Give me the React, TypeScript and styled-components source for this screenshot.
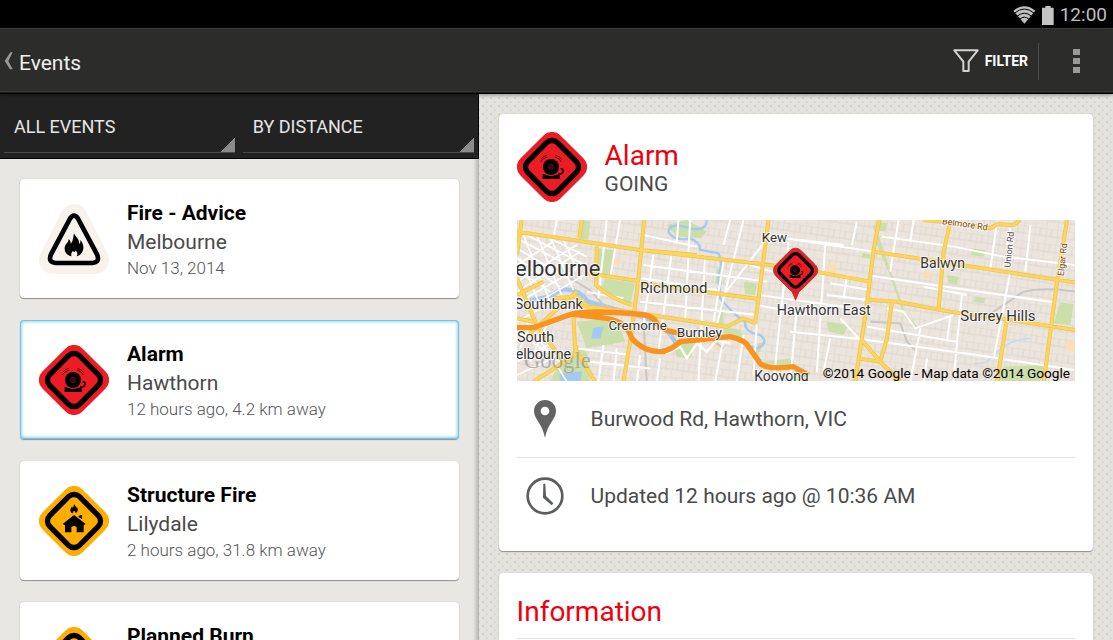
import React, { useState } from "react";
import styled, { createGlobalStyle, css } from "styled-components";

const GlobalStyle = createGlobalStyle`
  *, *::before, *::after { box-sizing: border-box; }
  body {
    margin: 0;
    font-family: Roboto, "Noto Sans", sans-serif;
    background: #e8e7e3;
    color: #444;
  }
  button, select { font-family: inherit; }
  h1, h2, p, ul { margin: 0; padding: 0; }
`;

const Screen = styled.div`
  display: flex;
  flex-direction: column;
  height: 100vh;
  overflow: hidden;
`;

const StatusBar = styled.div`
  flex: none;
  display: flex;
  align-items: center;
  justify-content: flex-end;
  gap: 6px;
  height: 28px;
  padding: 2px 6px 0 0;
  background: #000;
  color: #bebebe;
  font-size: 19px;
  line-height: 26px;
  font-weight: 400;
`;

const ActionBar = styled.header`
  flex: none;
  display: flex;
  align-items: center;
  justify-content: space-between;
  height: 66px;
  padding: 0 16px 0 4px;
  background: #2c2c2a;
  border-top: 1px solid #3d3d3c;
  border-bottom: 1px solid #000;
  box-shadow: inset 0 -1px 0 #1b1b1a, inset 0 -2px 0 #3a3a38, 0 1px 4px rgba(0, 0, 0, 0.4);
  position: relative;
  z-index: 2;
`;

const UpLink = styled.a`
  display: flex;
  align-items: center;
  gap: 6px;
  color: #f0f0f0;
  text-decoration: none;
`;

const ScreenTitle = styled.h1`
  padding-top: 3px;
  font-size: 21px;
  line-height: 28px;
  font-weight: 400;
`;

const Actions = styled.div`
  display: flex;
  align-items: center;
`;

const FilterButton = styled.button`
  display: flex;
  align-items: center;
  gap: 6px;
  height: 37px;
  padding: 0 10px;
  border: 0;
  border-right: 1px solid #4b4b49;
  background: none;
  color: #fff;
  font-size: 14px;
  font-weight: 700;
`;

const OverflowButton = styled.button`
  display: flex;
  align-items: center;
  justify-content: flex-end;
  width: 58px;
  height: 48px;
  padding: 0 17px 0 0;
  border: 0;
  background: none;
`;

const Panes = styled.main`
  flex: 1;
  min-height: 0;
  display: flex;
`;

const ListPane = styled.section`
  flex: none;
  display: flex;
  flex-direction: column;
  width: 43%;
  min-height: 0;
  background: linear-gradient(to left, rgba(0, 0, 0, 0.22), rgba(0, 0, 0, 0) 6px), #e8e7e3;
`;

const Spinners = styled.div`
  flex: none;
  display: flex;
  gap: 8px;
  height: 65px;
  padding: 0 4px 5px;
  background: #222;
  border-right: 1px solid #000;
  border-bottom: 1px solid #000;
`;

const Spinner = styled.label`
  flex: 1;
  display: flex;
  border-bottom: 1px solid #4a4a4a;
  background: linear-gradient(135deg, transparent 50%, #8b8b8b 50%) right bottom / 14px 14px no-repeat;
`;

const SpinnerSelect = styled.select`
  flex: 1;
  width: 100%;
  appearance: none;
  border: 0;
  background: none;
  padding: 6px 10px 0;
  color: #e6e6e6;
  font-size: 18px;
`;

const EventList = styled.ul`
  flex: 1;
  min-height: 0;
  overflow-y: auto;
  scrollbar-width: none;
  display: flex;
  flex-direction: column;
  gap: 22px;
  padding: 20px;
  list-style: none;
`;

const cardSurface = css`
  background: #fff;
  border-radius: 4px;
  box-shadow: 0 1px 1px #8f8f8c, 0 0 1px #b9b8b4;
`;

const EventCard = styled.button<{ $selected: boolean }>`
  ${cardSurface}
  display: flex;
  align-items: center;
  gap: 18px;
  width: 100%;
  height: 119px;
  padding: 0 19px;
  border: 0;
  text-align: left;
  ${(p) =>
    p.$selected &&
    css`
      box-shadow: inset 0 0 0 1px #74c6e6, inset 0 0 3px 2px #8fd6f2, 0 1px 1px #8f8f8c;
    `}
`;

const Lines = styled.span`
  display: flex;
  flex-direction: column;
`;

const EventName = styled.span`
  font-size: 21px;
  line-height: 30px;
  font-weight: 700;
  color: #000;
`;

const EventPlace = styled.span`
  font-size: 21px;
  line-height: 28px;
  color: #4a4a4a;
`;

const EventTime = styled.span`
  font-size: 17px;
  line-height: 24px;
  font-weight: 300;
  color: #555;
`;

const DetailPane = styled.section`
  flex: 1;
  min-width: 0;
  overflow-y: auto;
  scrollbar-width: none;
  display: flex;
  flex-direction: column;
  gap: 22px;
  padding: 20px;
  background-color: #e3e2dc;
  background-image: radial-gradient(circle, #d3d1cb 1px, transparent 1px),
    radial-gradient(circle, #d8d6d0 1px, transparent 1px);
  background-size: 8px 8px;
  background-position: 0 0, 4px 4px;
`;

const DetailCard = styled.article`
  ${cardSurface}
  flex: none;
  padding: 18px;
`;

const DetailHeader = styled.header`
  display: flex;
  align-items: center;
  gap: 18px;
  margin-bottom: 18px;
`;

const HeaderText = styled.div`
  padding-top: 2px;
`;

const RedTitle = styled.h2`
  font-size: 28px;
  line-height: 32px;
  font-weight: 400;
  color: #f0000c;
`;

const EventStatus = styled.p`
  font-size: 21px;
  line-height: 24px;
  color: #4a4a4a;
`;

const MapFrame = styled.svg`
  display: block;
  width: 100%;
  height: 161px;
`;

const InfoRow = styled.div`
  display: flex;
  align-items: center;
  gap: 18px;
  height: 76px;
  font-size: 21px;
  line-height: 24px;
  color: #4a4a4a;
  & + & {
    border-top: 1px solid #e6e6e6;
  }
`;

const RowIcon = styled.span`
  display: flex;
  justify-content: center;
  width: 56px;
`;

const InformationTitle = styled(RedTitle)`
  padding: 5px 0 10px;
  border-bottom: 1px solid #e6e6e6;
`;

const InformationText = styled.p`
  padding-top: 18px;
  font-size: 21px;
  line-height: 28px;
`;

type IconKind = "advice" | "alarm" | "structure" | "burn";

const Flame = () => (
  <path d="M0-35C5-23 18-17 15-3C20-7 20-12 19-16C29-5 32 13 22 25C18 31 12 33 8 34C12 27 10 22 4 16C5 22-1 22-3 18C-8 23-10 28-7 34C-21 31-29 21-28 9C-27-4-16-6-16-18C-11-13-9-8-10-3C-2-11-3-23 0-35Z" />
);

const Bell = () => (
  <g>
    <circle cx="102" cy="105" r="24" />
    <circle cx="102" cy="105" r="7" fill="none" stroke="#c4161c" strokeWidth="2" />
    <circle cx="102" cy="105" r="2" fill="#c4161c" />
    <path d="M77 125L86 128Q102 136 118 128H128V141H77Z" />
    <path d="M124 125Q138 128 138 116Q138 110 131 111" fill="none" stroke="#000" strokeWidth="5" />
    <path d="M70 90Q76 79 91 75M72 81Q79 72 89 70M114 75Q128 79 133 90M115 70Q128 73 134 82" fill="none" stroke="#5a0a0c" strokeWidth="3" />
  </g>
);

const EventIcon = ({ kind }: { kind: IconKind }) => {
  if (kind === "advice") {
    return (
      <svg width="70" height="70" viewBox="0 0 210 210" aria-hidden="true">
        <path d="M105 42L42 168H168Z" fill="#f7f2eb" stroke="#f7f2eb" strokeWidth="84" strokeLinejoin="round" />
        <path d="M93 44Q105 26 117 44L174 151Q184 175 160 177H50Q26 175 36 151Z" fill="#f7f2eb" stroke="#000" strokeWidth="14" />
        <g transform="translate(105 123)"><Flame /></g>
      </svg>
    );
  }
  const color = kind === "alarm" ? "#ed1c24" : "#ffad00";
  return (
    <svg width="70" height="70" viewBox="0 0 210 210" aria-hidden="true">
      <g transform="rotate(45 105 105)">
        <rect x="20" y="20" width="170" height="170" rx="36" fill={color} />
        <rect x="42" y="42" width="126" height="126" rx="23" fill="none" stroke="#000" strokeWidth="16" />
      </g>
      {kind === "alarm" && <Bell />}
      {kind === "structure" && (
        <g>
          <g transform="translate(105 68) scale(.4)"><Flame /></g>
          <path d="M105 87L140 114L134 118V139H113V124Q105 116 97 124V139H78V118L71 114Z" />
          <path d="M119 90L126 87H129V99L119 94Z" />
        </g>
      )}
      {kind === "burn" && <g transform="translate(105 105)"><Flame /></g>}
    </svg>
  );
};

const WifiIcon = () => (
  <svg width="23" height="18" viewBox="0 0 69 54" aria-hidden="true">
    <path d="M34 53L1 14Q34-12 67 14Z" fill="#bebebe" />
    <path d="M5 21Q34-3 63 21M12 31Q34 12 56 31M20 40Q34 27 48 40" fill="none" stroke="#000" strokeWidth="3" />
  </svg>
);

const BatteryIcon = () => (
  <svg width="12" height="19" viewBox="0 0 36 57" aria-hidden="true">
    <path d="M10 0H26V5H35V57H0V5H10Z" fill="#c4c4c4" />
  </svg>
);

const ChevronIcon = () => (
  <svg width="9" height="18" viewBox="0 0 27 54" aria-hidden="true">
    <path d="M19 1H26L13 27L26 52H18L2 27Z" fill="#999" />
  </svg>
);

const FunnelIcon = () => (
  <svg width="26" height="24" viewBox="0 0 78 72" aria-hidden="true">
    <path d="M4 4H74L47 38V66H31V38Z" fill="none" stroke="#d2d2d2" strokeWidth="6" strokeLinejoin="round" />
  </svg>
);

const OverflowIcon = () => (
  <svg width="7" height="24" viewBox="0 0 7 24" aria-hidden="true">
    <path d="M0 0H7V6H0ZM0 9H7V15H0ZM0 18H7V24H0Z" fill="#9a9a9a" />
  </svg>
);

const PinIcon = () => (
  <svg width="22" height="38" viewBox="0 0 66 114" aria-hidden="true">
    <path d="M33 0A33 33 0 0 0 0 33C0 58 26 72 33 114C40 72 66 58 66 33A33 33 0 0 0 33 0ZM33 20A13 13 0 1 1 33 46A13 13 0 1 1 33 20Z" fill="#636363" />
  </svg>
);

const ClockIcon = () => (
  <svg width="38" height="38" viewBox="0 0 114 114" aria-hidden="true">
    <circle cx="57" cy="57" r="52" fill="none" stroke="#5c5e5e" strokeWidth="8" />
    <path d="M52 20H58L60 57L82 79L77 85L51 62Z" fill="#5c5e5e" />
  </svg>
);

const streets =
  "M290 15L265 250M330 15L300 190M430 120L400 330M485 110L445 410M540 15L525 320M585 120L565 500M640 140L610 320M505 15L500 80M700 15L620 330M780 60L640 240M660 15L640 90M720 150L850 190M400 60L560 95M400 150L770 200M395 190L620 225M390 260L740 300M640 370L615 500M700 360L680 500M740 330L730 480M835 80L790 500M860 280L840 500M745 240L1000 275M740 270L900 300M760 60L1090 110M870 75L1000 90M1040 20L1025 90M945 90L920 470M960 205L1080 225M950 240L1075 255M1010 180L1000 250M1085 183L1630 262M1240 215L1370 240M1115 65L1330 95M1165 15L1140 170M1210 15L1200 80M1330 95L1480 125L1695 150M1500 40L1490 90M1460 20L1440 160M1560 30L1545 170M1500 170L1450 430M1130 280L1180 290L1215 340L1330 300M1070 335L1340 380M840 350L1050 372L1400 420L1690 465M1320 300L1310 380M1340 380L1330 500M960 370L940 470M990 310L1050 375M1230 340L1200 500M1250 430L1240 500M1355 240L1340 380M200 400L360 420M240 440L420 460M280 390L265 500M320 400L310 500M390 420L380 500M450 430L440 500M230 230L340 250M140 15L130 70";
const cityGrid =
  "M21 100L170 190M21 130L150 215M21 70L210 170M50 60L225 150M100 60L230 125M21 165L120 230M21 230L210 110M21 265L230 145M21 200L200 90M21 150L130 80M60 275L240 170M21 320L110 270M40 60L120 260M80 60L155 240M120 65L190 225M160 75L215 195M30 130L90 270M21 350L150 440M50 320L120 420M21 440L130 380M21 480L150 420M70 310L30 400M110 330L60 440M110 400L170 500";
const arterials =
  "M21 50L390 105L850 158L1080 200M35 15L21 120M215 15L208 70M402 15L385 190L365 350L340 500M390 105L560 120M260 95L258 210Q300 250 365 270M235 175L385 198M385 205L745 252L775 15M745 252L735 325M100 200L21 240M21 190L80 330L160 440M60 355L200 230M200 270L420 300L650 335L700 310L735 325M130 250L200 245L240 280M21 310L70 320M190 300L195 400L255 500M70 500L195 420L200 390M1107 15L1090 105L1070 270L1035 500M1090 110L1695 203M1240 15L1340 25L1440 40L1460 28L1510 30L1530 15M1320 20L1300 110L1285 280M1075 255L1160 260L1320 290L1500 315L1695 345M1670 15L1640 200L1600 500M1145 260L1130 370L1110 440L1045 430M1055 375L1110 440L1170 500M1490 310L1460 500";
const freeway =
  "M21 338L70 338L185 297Q240 285 380 297Q430 300 440 325Q460 350 520 356M185 297L290 310Q350 320 365 370Q400 410 450 410Q480 408 510 380L560 375L660 365Q705 375 715 395L750 445Q770 465 850 455L895 480";

const mapLabels = [
  { text: "elbourne", x: 15, y: 184, size: 66 },
  { text: "Southbank", x: 14, y: 282, size: 43 },
  { text: "South", x: 21, y: 382, size: 43 },
  { text: "elbourne", x: 17, y: 433, size: 43 },
  { text: "Richmond", x: 390, y: 234, size: 45 },
  { text: "Cremorne", x: 295, y: 344, size: 40 },
  { text: "Burnley", x: 500, y: 367, size: 41 },
  { text: "Kew", x: 755, y: 81, size: 40 },
  { text: "Kooyong", x: 732, y: 498, size: 42 },
  { text: "Hawthorn East", x: 800, y: 301, size: 43 },
  { text: "Balwyn", x: 1230, y: 158, size: 42 },
  { text: "Surrey Hills", x: 1350, y: 319, size: 45 },
];

const AreaMap = () => (
  <MapFrame viewBox="21 15 1674 483" preserveAspectRatio="xMidYMid slice" role="img" aria-label="Map of Hawthorn">
    <defs>
      <pattern id="blocks" width="34" height="46" patternUnits="userSpaceOnUse" patternTransform="rotate(8)">
        <path d="M0 0V46M17 0V23M0 0H34M0 23H34" stroke="#ddd6cf" strokeWidth="3" fill="none" />
      </pattern>
    </defs>
    <rect x="21" y="15" width="1674" height="483" fill="#ece5dd" />
    <rect x="21" y="15" width="1674" height="483" fill="url(#blocks)" />
    <g fill="#cadfaa">
      <path d="M215 15L240 18L235 75L205 70ZM262 100L310 105L305 180L262 175ZM285 190L375 205L362 265L270 225ZM470 30L530 15L590 50L570 70L500 65ZM620 160L640 165L635 210L615 205ZM700 200L740 205L735 240L705 238ZM200 320L320 310L345 380L230 400ZM195 400L230 410L240 500H120L140 460ZM640 270L615 330L690 345L700 370L640 360ZM490 390L560 380L540 430L500 425ZM760 440L840 430L850 460L780 470ZM710 400L760 380L740 430ZM1095 20L1130 25L1125 50L1100 45ZM950 320L1015 330L1000 360L955 350ZM1385 100L1425 105L1420 125L1380 120ZM1650 262L1690 268L1680 330L1630 325ZM1480 455L1600 450L1590 500H1460ZM1395 245L1425 250L1420 265L1390 260ZM1310 180L1345 185L1340 210L1315 205ZM840 470L890 470L895 500H850ZM1055 115L1080 118V130L1055 128Z" />
      <path d="M1090 30L1180 290L1220 340M1100 80L1150 200" fill="none" stroke="#cadfaa" strokeWidth="7" />
    </g>
    <g fill="#f8dfb5">
      <path d="M310 130L330 132L328 150L308 148ZM950 145L980 150L975 175L950 170ZM1670 375L1695 378V410L1665 405ZM1240 170L1265 172L1260 190L1235 188ZM600 390L630 385L625 410Z" />
    </g>
    <g fill="none" stroke="#a5c9f5" strokeLinejoin="round">
      <path d="M60 255Q120 250 150 225Q200 215 235 260L380 300Q480 330 500 395" strokeWidth="13" />
      <path d="M590 15Q590 50 540 40Q480 20 475 50Q490 80 540 70Q570 80 570 105L625 115Q640 150 625 180L630 250Q670 300 705 320Q700 350 750 360Q780 385 740 400L710 390" strokeWidth="7" />
      <path d="M1560 370Q1500 370 1450 420Q1430 450 1390 445" stroke="#c5d8ee" strokeWidth="4" />
      <path d="M150 475L215 470L210 500H150Z" fill="#a5c9f5" />
      <path d="M250 340L280 335L270 370L245 370Z" fill="#a5c9f5" strokeWidth="2" />
    </g>
    <path d="M180 190L240 225L280 270L400 310L410 500M560 340L640 400M1080 320L1170 325L1190 380L1220 410M1420 310L1540 230Q1600 215 1695 230" fill="none" stroke="#c9c6c4" strokeWidth="6" />
    <path d={streets} fill="none" stroke="#fff" strokeWidth="6" />
    <path d={cityGrid} fill="none" stroke="#fff" strokeWidth="5" />
    <path d="M420 400L470 415L510 395L530 430L560 385L590 410L620 375L660 385" fill="none" stroke="#fff" strokeWidth="7" />
    <path d={arterials} fill="none" stroke="#efc24e" strokeWidth="12" strokeLinejoin="round" />
    <path d={arterials} fill="none" stroke="#fbd65a" strokeWidth="8" strokeLinejoin="round" />
    <path d={freeway} fill="none" stroke="#f7931e" strokeWidth="16" strokeLinejoin="round" />
    <text x="42" y="458" fontSize="68" fill="#999" fillOpacity="0.75" fontFamily="Liberation Serif, serif">Google</text>
    <g fill="#333" stroke="#fff" strokeWidth="6" strokeOpacity="0.8" paintOrder="stroke" strokeLinejoin="round">
      {mapLabels.map((l) => (
        <text key={l.text + l.y} x={l.x} y={l.y} fontSize={l.size}>{l.text}</text>
      ))}
      <g fill="#7a4a12" fontSize="27">
        <text transform="translate(1294 27) rotate(8)">Belmore Rd</text>
        <text transform="translate(1660 184) rotate(-84)">Elgar Rd</text>
        <text transform="translate(1500 158) rotate(-84)" fill="#555">Union Rd</text>
      </g>
    </g>
    <text x="1679" y="489" fontSize="41" textAnchor="end" fill="#000">©2014 Google - Map data ©2014 Google</text>
    <path d="M838 215L856 258L874 215Z" fill="#ed1c24" />
    <g transform="translate(790 100) scale(.63)">
      <g transform="rotate(45 105 105)">
        <rect x="20" y="20" width="170" height="170" rx="36" fill="#ed1c24" stroke="#8d3b3b" strokeWidth="4" />
        <rect x="42" y="42" width="126" height="126" rx="23" fill="none" stroke="#000" strokeWidth="16" />
      </g>
      <Bell />
    </g>
  </MapFrame>
);

const events: { name: string; place: string; time: string; icon: IconKind }[] = [
  { name: "Fire - Advice", place: "Melbourne", time: "Nov 13, 2014", icon: "advice" },
  { name: "Alarm", place: "Hawthorn", time: "12 hours ago, 4.2 km away", icon: "alarm" },
  { name: "Structure Fire", place: "Lilydale", time: "2 hours ago, 31.8 km away", icon: "structure" },
  { name: "Planned Burn", place: "", time: "", icon: "burn" },
];

export default function App() {
  const [selected, setSelected] = useState(1);
  return (
    <>
      <GlobalStyle />
      <Screen>
        <StatusBar>
          <WifiIcon />
          <BatteryIcon />
          <span>12:00</span>
        </StatusBar>
        <ActionBar>
          <UpLink href="#events">
            <ChevronIcon />
            <ScreenTitle>Events</ScreenTitle>
          </UpLink>
          <Actions>
            <FilterButton type="button">
              <FunnelIcon />
              FILTER
            </FilterButton>
            <OverflowButton type="button" aria-label="More options">
              <OverflowIcon />
            </OverflowButton>
          </Actions>
        </ActionBar>
        <Panes>
          <ListPane>
            <Spinners>
              <Spinner>
                <SpinnerSelect aria-label="Event type">
                  <option>ALL EVENTS</option>
                </SpinnerSelect>
              </Spinner>
              <Spinner>
                <SpinnerSelect aria-label="Sort order">
                  <option>BY DISTANCE</option>
                </SpinnerSelect>
              </Spinner>
            </Spinners>
            <EventList>
              {events.map((e, i) => (
                <li key={e.name}>
                  <EventCard type="button" $selected={i === selected} aria-pressed={i === selected} onClick={() => setSelected(i)}>
                    <EventIcon kind={e.icon} />
                    <Lines>
                      <EventName>{e.name}</EventName>
                      <EventPlace>{e.place || "\u00a0"}</EventPlace>
                      <EventTime>{e.time || "\u00a0"}</EventTime>
                    </Lines>
                  </EventCard>
                </li>
              ))}
            </EventList>
          </ListPane>
          <DetailPane>
            <DetailCard>
              <DetailHeader>
                <EventIcon kind="alarm" />
                <HeaderText>
                  <RedTitle>Alarm</RedTitle>
                  <EventStatus>GOING</EventStatus>
                </HeaderText>
              </DetailHeader>
              <AreaMap />
              <InfoRow>
                <RowIcon><PinIcon /></RowIcon>
                Burwood Rd, Hawthorn, VIC
              </InfoRow>
              <InfoRow>
                <RowIcon><ClockIcon /></RowIcon>
                Updated 12 hours ago @ 10:36 AM
              </InfoRow>
            </DetailCard>
            <DetailCard>
              <InformationTitle>Information</InformationTitle>
              <InformationText>&nbsp;</InformationText>
            </DetailCard>
          </DetailPane>
        </Panes>
      </Screen>
    </>
  );
}
